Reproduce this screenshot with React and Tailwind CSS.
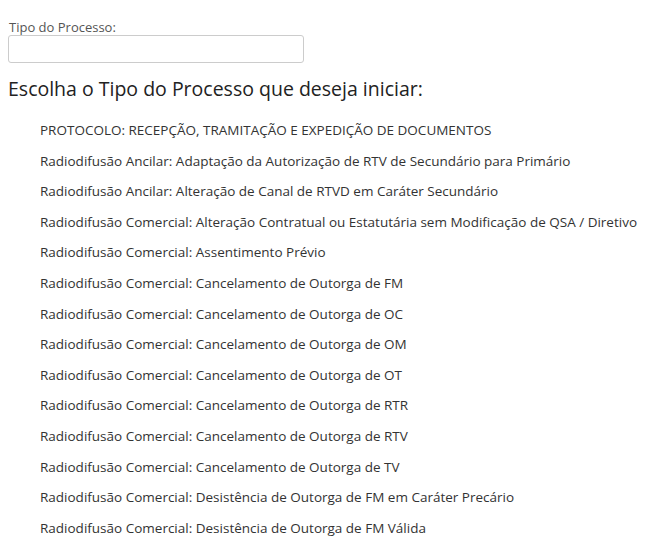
import React from "react";

const tipos = [
    "PROTOCOLO: RECEPÇÃO, TRAMITAÇÃO E EXPEDIÇÃO DE DOCUMENTOS",
    "Radiodifusão Ancilar: Adaptação da Autorização de RTV de Secundário para Primário",
    "Radiodifusão Ancilar: Alteração de Canal de RTVD em Caráter Secundário",
    "Radiodifusão Comercial: Alteração Contratual ou Estatutária sem Modificação de QSA / Diretivo",
    "Radiodifusão Comercial: Assentimento Prévio",
    "Radiodifusão Comercial: Cancelamento de Outorga de FM",
    "Radiodifusão Comercial: Cancelamento de Outorga de OC",
    "Radiodifusão Comercial: Cancelamento de Outorga de OM",
    "Radiodifusão Comercial: Cancelamento de Outorga de OT",
    "Radiodifusão Comercial: Cancelamento de Outorga de RTR",
    "Radiodifusão Comercial: Cancelamento de Outorga de RTV",
    "Radiodifusão Comercial: Cancelamento de Outorga de TV",
    "Radiodifusão Comercial: Desistência de Outorga de FM em Caráter Precário",
    "Radiodifusão Comercial: Desistência de Outorga de FM Válida",
];

export default function App() {
    return (
        <div className="min-h-[543px] bg-white px-2 pt-[20px] font-['Open_Sans',sans-serif] text-[#333]">
            <label className="block pl-px text-[13px] leading-[15px] text-[#555]">Tipo do Processo:</label>
            <input type="text" className="block h-[28px] w-[296px] rounded-[3px] border border-[#ccc] bg-white" />
            <h2 className="mt-[14px] text-[19.5px] leading-[24px] text-[#222]">Escolha o Tipo do Processo que deseja iniciar:</h2>
            <ul className="mt-[20px] pl-8">
                {tipos.map((t) => (
                    <li key={t} className="h-[30.6px] text-[13.5px] leading-[18px] text-[#333]">
                        <a href="#" className="hover:underline">{t}</a>
                    </li>
                ))}
            </ul>
        </div>
    );
}
